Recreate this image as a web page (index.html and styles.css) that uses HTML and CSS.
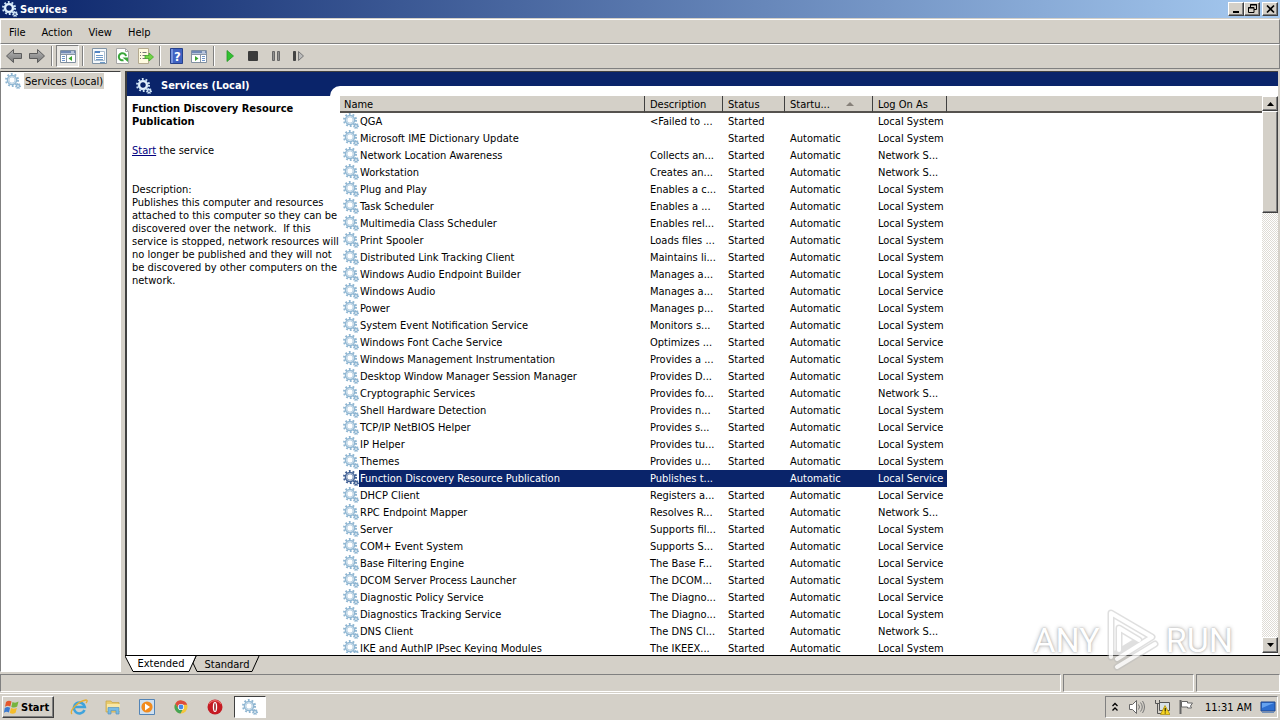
FILE: index.html
```html
<!DOCTYPE html>
<html lang="en">
<head>
  <meta charset="utf-8" />
  <meta name="viewport" content="width=device-width, initial-scale=1" />
  <title>Services</title>
  <link rel="stylesheet" href="styles.css">
</head>
<body>
  <svg class="defs" aria-hidden="true">
    <linearGradient id="arrow-fill" x2="0" y2="1"><stop offset="0" stop-color="#b5b5b5"/><stop offset="1" stop-color="#777"/></linearGradient>
    <symbol id="gear" viewBox="0 0 16 16">
      <circle cx="7" cy="7" r="6" fill="none" stroke="currentColor" stroke-width="2" stroke-dasharray="1.800 1.970"/>
      <circle cx="7" cy="7" r="4" fill="none" stroke="currentColor" stroke-width="2.600"/>
      <circle cx="7" cy="7" r="3.700" fill="none" stroke="#fff" stroke-width="1" opacity=".55"/>
      <circle cx="13" cy="13" r="2.300" fill="none" stroke="currentColor" stroke-width="1.400" stroke-dasharray="1 .800"/>
      <circle cx="13" cy="13" r="1.500" fill="none" stroke="currentColor" stroke-width="1.300"/>
    </symbol>
  </svg>

  <header class="titlebar">
    <svg class="gear light"><use href="#gear"/></svg>
    <h1>Services</h1>
    <div class="window-buttons">
      <button aria-label="Minimize"><svg width="11" height="10"><path d="M2 8h6" stroke="#000" stroke-width="2"/></svg></button>
      <button aria-label="Restore"><svg width="11" height="10" fill="none" stroke="#000"><path d="M3.500 3V.5h6v5H7M3 1h7M1.500 3.500h5.500v5H1.500zM1 4h6"/></svg></button>
      <button class="close" aria-label="Close"><svg width="11" height="10"><path d="M2 1.500l7 7M9 1.500l-7 7" stroke="#000" stroke-width="1.700"/></svg></button>
    </div>
  </header>

  <nav class="menubar">
    <button>File</button>
    <button>Action</button>
    <button>View</button>
    <button>Help</button>
  </nav>

  <div class="toolbar">
    <button aria-label="Back"><svg width="18" height="18"><path d="M1.500 9l7-6.500v4h8v5h-8v4z" fill="url(#arrow-fill)" stroke="#5c5c5c"/></svg></button>
    <button aria-label="Forward"><svg width="18" height="18"><path d="M16.500 9l-7-6.500v4h-8v5h8v4z" fill="url(#arrow-fill)" stroke="#5c5c5c"/></svg></button>
    <i class="sep"></i>
    <button class="pressed" aria-label="Show console tree"><svg width="18" height="18"><path d="M1.500 3.500h15v12h-15z" fill="#fff" stroke="#8190a0"/><path d="M2 4h14v2.500H2z" fill="#7189b4"/><path d="M12 5h3" stroke="#fff"/><path d="M2 7.500h14M7.500 8v7" stroke="#8a96a5"/><path d="M3 9.500h3M3 11.500h3M3 13.500h3" stroke="#6d94ca"/><path d="M13 9v5l-3.500-2.500z" fill="#39a52d"/></svg></button>
    <i class="sep"></i>
    <button aria-label="Properties"><svg width="18" height="18"><path d="M2.500 1.500h14v15h-14z" fill="#f4f8fb" stroke="#8093a5"/><path d="M4.500 4.500h10v9h-10z" fill="#fff" stroke="#a9bdd0"/><path d="M5 5h5" stroke="#5285c4" stroke-width="2"/><path d="M6 8.500h7M6 10.500h7M6 12.500h7M10 15.500h5" stroke="#6e9ac8"/></svg></button>
    <button aria-label="Refresh"><svg width="18" height="18"><path d="M3.500 1.500h9l3 3v12h-12z" fill="#fff" stroke="#a6a6a6"/><path d="M12.500 1.500v3h3" fill="none" stroke="#a6a6a6"/><path d="M10.500 13.200a3.600 3.600 0 1 1 2.500-4" fill="none" stroke="#39a63a" stroke-width="2"/><path d="M9.500 10.500h5.500v4.500z" fill="#39a63a"/></svg></button>
    <button aria-label="Export list"><svg width="18" height="18"><path d="M2.500 1.500h10v15h-10z" fill="#fffbe0" stroke="#b5ab90"/><path d="M4 5.500h1M4 8.500h1M4 11.500h1M6.500 5.500h4M6.500 8.500h4M6.500 11.500h4" stroke="#777"/><path d="M9 8.500h4V6l4.500 4-4.500 4v-2.500H9z" fill="#72d445" stroke="#3faa29" stroke-width=".8"/></svg></button>
    <i class="sep"></i>
    <button aria-label="Help"><svg width="18" height="18"><path d="M3.500 1.500h12v15h-12z" fill="#3f62c2" stroke="#27418c"/><path d="M4 2h2v14H4z" fill="#7894de"/><text x="7" y="14" font-size="13" fill="#fff" class="bold">?</text></svg></button>
    <button aria-label="Show action pane"><svg width="18" height="18"><path d="M1.500 3.500h15v12h-15z" fill="#fff" stroke="#8190a0"/><path d="M2 4h14v2.500H2z" fill="#7189b4"/><path d="M12 5h3" stroke="#fff"/><path d="M2 7.500h14M10.500 8v7" stroke="#8a96a5"/><path d="M12 9.500h3M12 11.500h3M12 13.500h3" stroke="#6d94ca"/><path d="M5 9v5l3.500-2.500z" fill="#39a52d"/></svg></button>
    <i class="sep"></i>
    <button aria-label="Start service"><svg width="18" height="18"><path d="M6 3.500v11l6.500-5.500z" fill="#31c130" stroke="#239724" stroke-width=".8"/></svg></button>
    <button aria-label="Stop service"><svg width="18" height="18"><rect x="4" y="4" width="10" height="10" rx="1" fill="#3b3b3b"/></svg></button>
    <button aria-label="Pause service"><svg width="18" height="18"><path d="M5.500 4.500h2v9h-2zM10.500 4.500h2v9h-2z" fill="#8f8f8f" stroke="#666"/></svg></button>
    <button aria-label="Restart service"><svg width="18" height="18"><path d="M3.500 4.500h2v9h-2z" fill="#444" stroke="#444"/><path d="M8.500 4.500v9l5-4.500z" fill="#bbb" stroke="#777"/></svg></button>
  </div>

  <main>
    <aside class="tree">
      <svg class="gear"><use href="#gear"/></svg>
      <span>Services (Local)</span>
    </aside>

    <section class="content">
      <div class="view">
        <div class="info">
          <h2><svg class="gear light"><use href="#gear"/></svg>Services (Local)</h2>
          <div class="details">
            <h3>Function Discovery Resource Publication</h3>
            <p><a href="#">Start</a> the service</p>
            <p class="description">Description:<br>Publishes this computer and resources<br>attached to this computer so they can be<br>discovered over the network.&nbsp; If this<br>service is stopped, network resources will<br>no longer be published and they will not<br>be discovered by other computers on the<br>network.</p>
          </div>
        </div>
        <div class="list-side">
          <div class="list">
            <div class="rows">
              <table>
                <colgroup><col class="c-name"><col class="c-desc"><col class="c-status"><col class="c-startup"><col class="c-logon"><col></colgroup>
                <thead>
                  <tr><th>Name</th><th>Description</th><th>Status</th><th>Startu...<svg class="sort" width="8" height="4"><path d="M4 0l4 4H0z" fill="#868079"/></svg></th><th>Log On As</th><th></th></tr>
                </thead>
                <tbody>
                  <tr><td><svg class="gear"><use href="#gear"/></svg>QGA</td><td>&lt;Failed to ...</td><td>Started</td><td></td><td>Local System</td></tr>
                  <tr><td><svg class="gear"><use href="#gear"/></svg>Microsoft IME Dictionary Update</td><td></td><td>Started</td><td>Automatic</td><td>Local System</td></tr>
                  <tr><td><svg class="gear"><use href="#gear"/></svg>Network Location Awareness</td><td>Collects an...</td><td>Started</td><td>Automatic</td><td>Network S...</td></tr>
                  <tr><td><svg class="gear"><use href="#gear"/></svg>Workstation</td><td>Creates an...</td><td>Started</td><td>Automatic</td><td>Network S...</td></tr>
                  <tr><td><svg class="gear"><use href="#gear"/></svg>Plug and Play</td><td>Enables a c...</td><td>Started</td><td>Automatic</td><td>Local System</td></tr>
                  <tr><td><svg class="gear"><use href="#gear"/></svg>Task Scheduler</td><td>Enables a ...</td><td>Started</td><td>Automatic</td><td>Local System</td></tr>
                  <tr><td><svg class="gear"><use href="#gear"/></svg>Multimedia Class Scheduler</td><td>Enables rel...</td><td>Started</td><td>Automatic</td><td>Local System</td></tr>
                  <tr><td><svg class="gear"><use href="#gear"/></svg>Print Spooler</td><td>Loads files ...</td><td>Started</td><td>Automatic</td><td>Local System</td></tr>
                  <tr><td><svg class="gear"><use href="#gear"/></svg>Distributed Link Tracking Client</td><td>Maintains li...</td><td>Started</td><td>Automatic</td><td>Local System</td></tr>
                  <tr><td><svg class="gear"><use href="#gear"/></svg>Windows Audio Endpoint Builder</td><td>Manages a...</td><td>Started</td><td>Automatic</td><td>Local System</td></tr>
                  <tr><td><svg class="gear"><use href="#gear"/></svg>Windows Audio</td><td>Manages a...</td><td>Started</td><td>Automatic</td><td>Local Service</td></tr>
                  <tr><td><svg class="gear"><use href="#gear"/></svg>Power</td><td>Manages p...</td><td>Started</td><td>Automatic</td><td>Local System</td></tr>
                  <tr><td><svg class="gear"><use href="#gear"/></svg>System Event Notification Service</td><td>Monitors s...</td><td>Started</td><td>Automatic</td><td>Local System</td></tr>
                  <tr><td><svg class="gear"><use href="#gear"/></svg>Windows Font Cache Service</td><td>Optimizes ...</td><td>Started</td><td>Automatic</td><td>Local Service</td></tr>
                  <tr><td><svg class="gear"><use href="#gear"/></svg>Windows Management Instrumentation</td><td>Provides a ...</td><td>Started</td><td>Automatic</td><td>Local System</td></tr>
                  <tr><td><svg class="gear"><use href="#gear"/></svg>Desktop Window Manager Session Manager</td><td>Provides D...</td><td>Started</td><td>Automatic</td><td>Local System</td></tr>
                  <tr><td><svg class="gear"><use href="#gear"/></svg>Cryptographic Services</td><td>Provides fo...</td><td>Started</td><td>Automatic</td><td>Network S...</td></tr>
                  <tr><td><svg class="gear"><use href="#gear"/></svg>Shell Hardware Detection</td><td>Provides n...</td><td>Started</td><td>Automatic</td><td>Local System</td></tr>
                  <tr><td><svg class="gear"><use href="#gear"/></svg>TCP/IP NetBIOS Helper</td><td>Provides s...</td><td>Started</td><td>Automatic</td><td>Local Service</td></tr>
                  <tr><td><svg class="gear"><use href="#gear"/></svg>IP Helper</td><td>Provides tu...</td><td>Started</td><td>Automatic</td><td>Local System</td></tr>
                  <tr><td><svg class="gear"><use href="#gear"/></svg>Themes</td><td>Provides u...</td><td>Started</td><td>Automatic</td><td>Local System</td></tr>
                  <tr class="selected"><td><svg class="gear"><use href="#gear"/></svg>Function Discovery Resource Publication</td><td>Publishes t...</td><td></td><td>Automatic</td><td>Local Service</td></tr>
                  <tr><td><svg class="gear"><use href="#gear"/></svg>DHCP Client</td><td>Registers a...</td><td>Started</td><td>Automatic</td><td>Local Service</td></tr>
                  <tr><td><svg class="gear"><use href="#gear"/></svg>RPC Endpoint Mapper</td><td>Resolves R...</td><td>Started</td><td>Automatic</td><td>Network S...</td></tr>
                  <tr><td><svg class="gear"><use href="#gear"/></svg>Server</td><td>Supports fil...</td><td>Started</td><td>Automatic</td><td>Local System</td></tr>
                  <tr><td><svg class="gear"><use href="#gear"/></svg>COM+ Event System</td><td>Supports S...</td><td>Started</td><td>Automatic</td><td>Local Service</td></tr>
                  <tr><td><svg class="gear"><use href="#gear"/></svg>Base Filtering Engine</td><td>The Base F...</td><td>Started</td><td>Automatic</td><td>Local Service</td></tr>
                  <tr><td><svg class="gear"><use href="#gear"/></svg>DCOM Server Process Launcher</td><td>The DCOM...</td><td>Started</td><td>Automatic</td><td>Local System</td></tr>
                  <tr><td><svg class="gear"><use href="#gear"/></svg>Diagnostic Policy Service</td><td>The Diagno...</td><td>Started</td><td>Automatic</td><td>Local Service</td></tr>
                  <tr><td><svg class="gear"><use href="#gear"/></svg>Diagnostics Tracking Service</td><td>The Diagno...</td><td>Started</td><td>Automatic</td><td>Local System</td></tr>
                  <tr><td><svg class="gear"><use href="#gear"/></svg>DNS Client</td><td>The DNS Cl...</td><td>Started</td><td>Automatic</td><td>Network S...</td></tr>
                  <tr><td><svg class="gear"><use href="#gear"/></svg>IKE and AuthIP IPsec Keying Modules</td><td>The IKEEX...</td><td>Started</td><td>Automatic</td><td>Local System</td></tr>
                </tbody>
              </table>
            </div>
            <div class="scrollbar">
              <button aria-label="Scroll up"><svg width="7" height="4"><path d="M3.500 0L7 4H0z"/></svg></button>
              <div class="thumb"></div>
              <button class="down" aria-label="Scroll down"><svg width="7" height="4"><path d="M3.500 4L7 0H0z"/></svg></button>
            </div>
          </div>
        </div>
      </div>
      <div class="tabs">
        <button class="tab active"><svg width="72" height="16"><path d="M0 0l8 15.500h56L71 0" fill="#fff" stroke="#000"/></svg><span>Extended</span></button>
        <button class="tab"><svg width="68" height="16"><path d="M3 0L0 7l4 8.500h55L66 0" fill="#d4d0c8" stroke="#000"/></svg><span>Standard</span></button>
      </div>
    </section>
  </main>

  <footer class="statusbar"><div class="grow"></div><div class="mid"></div><div class="end"></div></footer>

  <div class="taskbar">
    <button class="start">
      <svg width="16" height="16"><path d="M2 3c2-1.500 3.500-1.500 5.500-.5L6.300 7.500c-2-1-3.500-.8-5.300.3z" fill="#e4572c"/><path d="M8.500 3c2 1 4 .8 6-.4l-1.300 5c-2 1.200-4 1.300-5.900.3z" fill="#77b43f"/><path d="M.8 9c2-1.200 3.500-1.200 5.300-.2l-1.200 4.700c-1.800-1-3.400-.8-5 .2z" fill="#3b7ad0"/><path d="M7 9c2 1 4 .9 5.900-.2l-1.300 4.900c-2 1.200-3.800 1.200-5.800.2z" fill="#f5bd2b"/></svg>
      Start
    </button>
    <div class="launch">
      <button aria-label="Internet Explorer"><svg width="18" height="18" fill="none"><path d="M14.500 12a5.500 5.500 0 1 1 .3-3H5" stroke="#3fa3dc" stroke-width="2.600"/><path d="M2 16C-1 13 8 3 16 2c2 0 1 2 0 3" stroke="#e6ae32" stroke-width="1.300"/></svg></button>
      <button aria-label="Explorer"><svg width="18" height="18"><path d="M2 3h5l1 1.500h7V14H2z" fill="#e9cb6c" stroke="#c9a84c" stroke-width=".8"/><path d="M3 6h13v7H3z" fill="#f8e7a5"/><path d="M4 16V9.500h11V16h-3v-3.500H7V16z" fill="#77bbe4" stroke="#5793bd" stroke-width=".7"/></svg></button>
      <button aria-label="Media Player"><svg width="18" height="18"><path d="M1.500 1.500h15v15h-15z" fill="#cfe0f0" stroke="#5384b6"/><circle cx="9" cy="9" r="5.600" fill="#f28b1d"/><path d="M7 5.500v7l5-3.500z" fill="#fff"/></svg></button>
      <button aria-label="Chrome"><svg width="18" height="18"><circle cx="9" cy="9" r="6.500" fill="#f4c63d"/><path d="M3.300 5.800a6.500 6.500 0 0 1 11.900 1H9L6 10z" fill="#dd4b3e"/><path d="M3.300 5.800A6.500 6.500 0 0 0 8.500 15.500L11 11 6 10z" fill="#45a456"/><circle cx="9" cy="9" r="3.100" fill="#fff"/><circle cx="9" cy="9" r="2.400" fill="#4689e8"/></svg></button>
      <button aria-label="Opera"><svg width="18" height="18"><circle cx="9" cy="9" r="7.500" fill="#c51a22"/><path d="M3 6a7 7 0 0 1 12 0" fill="none" stroke="#e86a68" stroke-width="1.200"/><ellipse cx="9" cy="9" rx="2.200" ry="5" fill="#fff"/><ellipse cx="9" cy="9" rx=".8" ry="4" fill="#8b171b"/></svg></button>
      <button class="running" aria-label="Services"><svg class="gear"><use href="#gear"/></svg></button>
    </div>
    <div class="tray">
      <svg width="10" height="16" fill="none" stroke="#000" stroke-width="1.300"><path d="M2.500 7L5 4.500 7.500 7M2.500 11.500L5 9l2.500 2.500"/></svg>
      <svg width="18" height="16"><path d="M1.500 5.500h3l4-4v13l-4-4h-3z" fill="#fff" stroke="#666"/><path d="M10.500 5.500q2 2.500 0 5M12.500 3.500q3.500 4.500 0 9M14.500 2q4 6 0 12" fill="none" stroke="#777"/></svg>
      <svg width="16" height="16"><path d="M5.500 3.500h10v8h-10z" fill="#d9e2e7" stroke="#555"/><path d="M1.500 1v3.500h4V1M3.500 5v9.500H9" fill="none" stroke="#555"/><path d="M11 6.500l5 9H6.500z" fill="#f6d41f" stroke="#ac8d05" stroke-width=".7"/><path d="M11.200 9v3.500M11.200 13.500v1" stroke="#000"/></svg>
      <svg width="16" height="16"><path d="M2.500 1v14" stroke="#666" stroke-width="2"/><path d="M3.500 2.500h6v1.500h5l-2 3 1 2h-4v-1h-6z" fill="#fff" stroke="#666"/></svg>
      <time>11:31 AM</time>
      <svg width="16" height="16"><path d="M1 3h14v9H1z" fill="#2e6fd0" stroke="#1e478d"/><path d="M2 4h12L2 9z" fill="#65a2ef"/><path d="M2 13.500h12" stroke="#7190b9"/></svg>
    </div>
  </div>

  <div class="watermark" aria-hidden="true">
    <span>ANY</span>
    <svg width="58" height="64" viewBox="0 0 58 64"><path d="M7 49V5l41 24-35 22M15 42V20l20 12L7 49M13 59l38-23" fill="none" stroke="#b8b8b8" stroke-width="7" stroke-linejoin="round" stroke-linecap="round" opacity=".55"/><path d="M7 49V5l41 24-35 22M15 42V20l20 12M13 59l38-23" fill="none" stroke="#fff" stroke-width="4" stroke-linejoin="round" stroke-linecap="round"/></svg>
    <span>RUN</span>
  </div>
</body>
</html>
```
FILE: styles.css
```css
* {
  box-sizing: border-box;
  margin: 0;
  padding: 0;
}

body {
  --face: #d4d0c8;
  --navy: #0a246a;
  --shadow: #808080;
  --dark: #404040;

  display: flex;
  flex-direction: column;
  height: 100vh;
  overflow: hidden;
  background: var(--face);
  color: #000;
  font: 11px/13px Tahoma, 'DejaVu Sans Condensed', 'DejaVu Sans', sans-serif;
}

button {
  border: none;
  background: none;
  color: inherit;
  font: inherit;
}

svg {
  flex: none;
  display: block;
}

.defs {
  position: absolute;
  width: 0;
  height: 0;
}

.bold {
  font-weight: bold;
}

.gear {
  width: 16px;
  height: 16px;
  color: #8fb6d2;
}

.gear.light {
  color: #cfe4f6;
}

.titlebar {
  display: flex;
  align-items: center;
  gap: 2px;
  height: 18px;
  padding: 0 2px;
  background: linear-gradient(to right, #0a246a, #a6caf0);
  color: #fff;

  h1 {
    flex: 1;
    font-size: 11px;
  }
}

.window-buttons {
  display: flex;

  button {
    display: flex;
    align-items: center;
    justify-content: center;
    width: 16px;
    height: 14px;
  }

  .close {
    margin-left: 2px;
  }
}

.window-buttons button,
.scrollbar button,
.thumb,
.start {
  border: 1px solid;
  border-color: #fff var(--dark) var(--dark) #fff;
  background: var(--face);
  box-shadow: inset -1px -1px var(--shadow);
}

.menubar,
.toolbar {
  display: flex;
  align-items: center;
  height: 25px;
  border: 1px solid;
  border-color: #fff var(--shadow) var(--shadow) #fff;
}

.menubar {
  margin-top: 1px;
  padding-top: 1px;

  button {
    padding: 0 8px;
  }
}

.toolbar {
  padding: 0 0 1px 1px;

  button {
    display: flex;
    align-items: center;
    justify-content: center;
    width: 23px;
    height: 22px;
  }

  .pressed {
    border: 1px solid;
    border-color: var(--shadow) #fff #fff var(--shadow);
    background: #e9e7e3;
  }

  .sep {
    width: 2px;
    height: 20px;
    margin: 0 3px;
    border-left: 1px solid var(--shadow);
    border-right: 1px solid #fff;
  }
}

main {
  flex: 1;
  display: flex;
  gap: 4px;
  min-height: 0;
  padding-top: 2px;
}

.tree {
  display: flex;
  align-items: flex-start;
  gap: 3px;
  width: 121px;
  padding: 1px 3px 1px 4px;
  border: 1px solid;
  border-color: var(--dark) #fff #fff var(--shadow);
  background: #fff;

  span {
    padding: 2px 1px 1px;
    background: var(--face);
    white-space: nowrap;
  }
}

.content {
  flex: 1;
  display: flex;
  flex-direction: column;
  min-width: 0;
}

.view {
  flex: 1;
  display: flex;
  min-height: 0;
  margin-right: 2px;
  border: solid var(--dark);
  border-width: 1px 0 0 2px;
  background: #fff;
}

.info {
  position: relative;
  z-index: 1;
  width: 203px;

  h2 {
    display: flex;
    align-items: center;
    gap: 9px;
    height: 24px;
    padding: 3px 9px 0;
    background: var(--navy);
    color: #fff;
    font-size: 11px;
  }
}

.details {
  padding: 6px 0 0 5px;
  white-space: nowrap;

  h3 {
    margin-bottom: 16px;
    font-size: 11px;
    white-space: normal;
  }

  a {
    color: #00007f;
  }

  .description {
    margin-top: 26px;
  }
}

.list-side {
  flex: 1;
  display: flex;
  min-width: 0;
  padding-top: 14px;
  background: linear-gradient(var(--navy) 24px, #fff 24px);
}

.list {
  flex: 1;
  display: flex;
  min-width: 0;
  padding: 10px 0 2px 10px;
  border-top-left-radius: 10px;
  background: #fff;
}

.rows {
  flex: 1;
  overflow: hidden;
}

table {
  width: 100%;
  border-collapse: separate;
  border-spacing: 0;
  table-layout: fixed;
  white-space: nowrap;
}

.c-name { width: 305px; }
.c-desc { width: 78px; }
.c-status { width: 62px; }
.c-startup { width: 88px; }
.c-logon { width: 74px; }

th {
  height: 17px;
  padding: 2px 5px 0;
  border-right: 1px solid var(--dark);
  border-bottom: 2px solid #55524e;
  background: var(--face);
  font-weight: normal;
  text-align: left;

  &:first-child {
    padding-left: 4px;
  }

  &:last-child {
    border-right: none;
  }
}

.sort {
  display: inline-block;
  margin-left: 16px;
  vertical-align: 2px;
}

td {
  height: 17px;
  padding: 1px 0 0 5px;

  &:first-child {
    padding-left: 3px;
  }

  .gear {
    display: inline-block;
    margin: -2px 1px 0 0;
    vertical-align: middle;
  }
}

tbody tr {
  line-height: 16px;
}

.selected {
  td {
    background: var(--navy);
    color: #fff;
  }

  td:first-child {
    background: linear-gradient(to right, #fff 19px, var(--navy) 19px);
  }

  .gear {
    color: #3f5f93;
  }
}

.scrollbar {
  display: flex;
  flex-direction: column;
  width: 16px;
  background: repeating-conic-gradient(#fff 0 25%, #dedbd5 0 50%) 0 0 / 2px 2px;

  button {
    display: flex;
    align-items: center;
    justify-content: center;
    height: 15px;
  }

  .thumb {
    height: 102px;
  }

  .down {
    height: 16px;
    margin-top: auto;
  }
}

.tabs {
  display: flex;
  height: 17px;
  border-top: 1px solid #000;
}

.tab {
  display: grid;
  place-items: center;

  > * {
    grid-area: 1 / 1;
  }
}

.tab.active {
  z-index: 1;
  margin: -1px -4px 0 0;
}

.statusbar {
  display: flex;
  gap: 2px;
  height: 20px;
  padding-top: 2px;

  div {
    border: 1px solid;
    border-color: var(--shadow) #fff #fff var(--shadow);
  }

  .grow { flex: 1; }
  .mid { width: 131px; }
  .end { width: 84px; }
}

.taskbar {
  display: flex;
  align-items: center;
  height: 27px;
  margin-top: 1px;
  padding: 0 2px;
  border-top: 1px solid #fff;
}

.start {
  display: flex;
  align-items: center;
  gap: 1px;
  width: 52px;
  height: 22px;
  padding: 0 1px;
  font-weight: bold;
}

.launch {
  flex: 1;
  display: flex;
  gap: 16px;
  padding-left: 16px;

  button {
    display: flex;
    align-items: center;
  }

  .running {
    justify-content: center;
    width: 32px;
    height: 22px;
    margin-left: -6px;
    border: 1px solid;
    border-color: var(--dark) #fff #fff var(--dark);
    background: #fff;
  }
}

.tray {
  display: flex;
  align-items: center;
  gap: 8px;
  height: 22px;
  padding: 0 1px 0 4px;
  border: 1px solid;
  border-color: var(--shadow) #fff #fff var(--shadow);

  time {
    margin-left: 3px;
  }
}

.watermark {
  position: absolute;
  right: 47px;
  bottom: 48px;
  display: flex;
  align-items: center;
  gap: 4px;
  color: #fff;
  font: 34px/64px 'Liberation Sans Narrow', 'Roboto', sans-serif;
  text-shadow: 0 0 2px #999, 0 0 4px #aaa;
  opacity: .8;
  pointer-events: none;
}
```
